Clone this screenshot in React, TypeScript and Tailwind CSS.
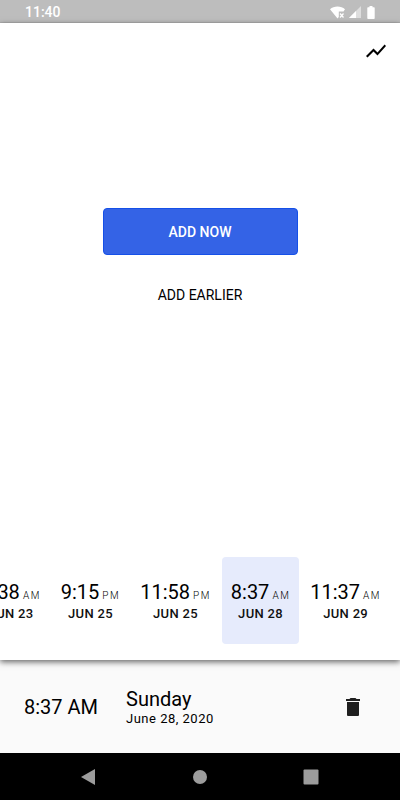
import React from "react";

type Entry = { time: string; period: string; date: string; selected?: boolean };

const entries: Entry[] = [
  { time: "9:38", period: "AM", date: "JUN 23" },
  { time: "9:15", period: "PM", date: "JUN 25" },
  { time: "11:58", period: "PM", date: "JUN 25" },
  { time: "8:37", period: "AM", date: "JUN 28", selected: true },
  { time: "11:37", period: "AM", date: "JUN 29" },
];

function StatusBar() {
  return (
    <header className="flex h-[23px] shrink-0 items-center justify-between border-b border-[#b0b0b0] bg-[#bdbdbd] pr-6 pl-[25px] text-white">
      <span className="pt-0.5 text-sm leading-4 font-medium">11:40</span>
      <div className="flex items-center gap-1 pt-0.5">
        <svg width="15" height="13" viewBox="0 0 15 13" aria-hidden="true">
          <path d="M0 3.200C2 1.500 4.600 .5 7.500 .5S13 1.500 15 3.200L13.500 5.500H8.800V11L7.500 12.500Z" fill="#fff" />
          <path d="M10 7.500L13.500 11.500M13.500 7.500L10 11.500" stroke="#fff" strokeWidth="1.300" />
        </svg>
        <svg width="12" height="12" viewBox="0 0 12 12" aria-hidden="true">
          <path d="M0 12L12 0V12Z" fill="#dedede" />
          <path d="M0 12L7 5V12Z" fill="#fff" />
        </svg>
        <svg className="ml-0.5" width="9" height="13" viewBox="0 0 9 13" aria-hidden="true">
          <path d="M2.500 0H5.500V1.200H7Q7.700 1.200 7.700 2V12Q7.700 13 7 13H1Q.3 13 .3 12V2Q.3 1.200 1 1.200H2.500Z" fill="#fff" />
        </svg>
      </div>
    </header>
  );
}

function EntryButton({ entry }: { entry: Entry }) {
  return (
    <button
      type="button"
      aria-pressed={!!entry.selected}
      className={`flex h-[87px] shrink-0 flex-col items-center justify-center rounded px-[9px] pt-0.5 ${entry.selected ? "bg-[#e6ebfc]" : "bg-white"}`}
    >
      <span className="flex items-baseline gap-[3px] text-xl leading-6">
        {entry.time}
        <span className="text-[10px] leading-3 font-light tracking-[1.5px]">{entry.period}</span>
      </span>
      <span className="text-[13px] leading-5 font-medium tracking-wide text-[#111111]">{entry.date}</span>
    </button>
  );
}

export default function App() {
  return (
    <div className="flex min-h-screen flex-col overflow-hidden bg-[#fafafa] font-['Roboto',sans-serif] text-black">
      <StatusBar />
      <main className="z-10 flex flex-1 flex-col bg-white shadow-[0_2px_6px_rgba(0,0,0,0.6)]">
        <div className="flex justify-end px-3 pt-4">
          <button type="button" aria-label="Show chart">
            <svg width="24" height="24" viewBox="0 0 24 24" aria-hidden="true">
              <path d="M3.500 18.490L9.500 12.480L13.500 16.480L22 6.920L20.590 5.510L13.500 13.480L9.500 9.480L2 16.990Z" />
            </svg>
          </button>
        </div>
        <div className="flex flex-1 flex-col items-center justify-center gap-4 pb-[94px]">
          <button type="button" className="h-[47px] w-[195px] rounded border border-[#1550e8] bg-[#3463e6] text-sm font-medium text-white">
            ADD NOW
          </button>
          <button type="button" className="h-[47px] w-[195px] text-sm">
            ADD EARLIER
          </button>
        </div>
        <div className="flex justify-end gap-0.5 overflow-hidden pr-2.5 pb-4">
          {entries.map((entry) => (
            <EntryButton key={entry.date + entry.time} entry={entry} />
          ))}
        </div>
      </main>
      <section className="flex h-[93px] shrink-0 items-center pr-[37px] pl-6">
        <span className="w-[102px] text-xl">8:37 AM</span>
        <div className="flex-1">
          <h2 className="text-xl leading-6">Sunday</h2>
          <p className="text-[13px] leading-4 tracking-[0.5px]">June 28, 2020</p>
        </div>
        <button type="button" aria-label="Delete entry">
          <svg width="20" height="22" viewBox="2 1 20 22" fill="#1f1f1f" aria-hidden="true">
            <path d="M6 20q0 1 1 1h10q1 0 1-1V7H6v13zM19 4h-3.500l-1-1h-5l-1 1H5v2h14V4z" />
          </svg>
        </button>
      </section>
      <nav className="flex h-[47px] shrink-0 items-center justify-center gap-[95px] bg-black">
        <button type="button" aria-label="Back">
          <svg width="16" height="16" viewBox="0 0 16 16" fill="#9c9c9c" aria-hidden="true">
            <path d="M0 8L14 0V16Z" />
          </svg>
        </button>
        <button type="button" aria-label="Home">
          <svg width="16" height="16" viewBox="0 0 16 16" fill="#9c9c9c" aria-hidden="true">
            <circle cx="8" cy="8" r="7" />
          </svg>
        </button>
        <button type="button" aria-label="Recent apps">
          <svg width="16" height="16" viewBox="0 0 16 16" fill="#9c9c9c" aria-hidden="true">
            <rect x=".5" y=".5" width="15" height="15" rx="1" />
          </svg>
        </button>
      </nav>
    </div>
  );
}
